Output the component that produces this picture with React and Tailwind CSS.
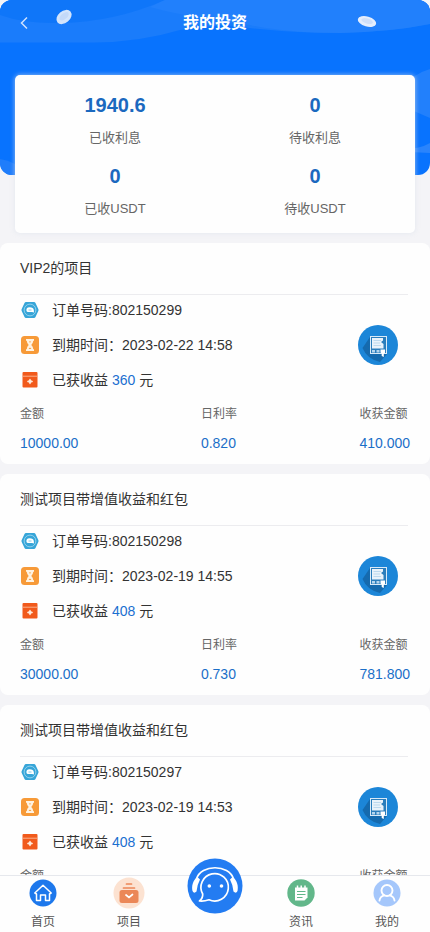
import React from 'react';

const orders = [
  { title: 'VIP2的项目', no: '802150299', due: '2023-02-22 14:58', earned: '360', amount: '10000.00', rate: '0.820', gain: '410.000' },
  { title: '测试项目带增值收益和红包', no: '802150298', due: '2023-02-19 14:55', earned: '408', amount: '30000.00', rate: '0.730', gain: '781.800' },
  { title: '测试项目带增值收益和红包', no: '802150297', due: '2023-02-19 14:53', earned: '408', amount: '30000.00', rate: '0.730', gain: '781.800' },
];

const stats = [
  ['1940.6', '已收利息'],
  ['0', '待收利息'],
  ['0', '已收USDT'],
  ['0', '待收USDT'],
];

function HeaderArt() {
  return (
    <svg className="absolute inset-0 h-full w-full" viewBox="0 0 430 175" preserveAspectRatio="none">
      <rect width="430" height="175" fill="#0873fe" />
      <path d="M0 0H430V24Q390 32 340 33Q285 33 225 25L180 30Q140 42 95 42.500H0Z" fill="#1a7cfb" />
      <path d="M0 0H165Q115 22 60 23Q25 24 0 15Z" fill="#0f76f9" />
      <path d="M165 0H430V24Q390 32 340 33Q285 33 250 25Q190 18 150 7Z" fill="#2180fc" />
      <path d="M430 69Q412 74 400 90V105L430 118Z" fill="#2280fc" />
      <path d="M400 149Q418 150 430 143V153Q414 152 400 152Z" fill="#2a84fc" />
      <path d="M0 159Q8 160 15 164V175H0Z" fill="#1f7dfb" />
      <g transform="rotate(-40 64 17)">
        <ellipse cx="64" cy="17" rx="8.500" ry="6" fill="#d3e4fb" />
        <ellipse cx="64.500" cy="16.500" rx="5.500" ry="3" fill="#c3d9f9" />
      </g>
      <g transform="rotate(16 367 21.500)">
        <ellipse cx="367" cy="21.500" rx="9.500" ry="5" fill="#e4edfc" />
        <ellipse cx="367" cy="21" rx="6" ry="2.500" fill="#cfdff9" />
      </g>
    </svg>
  );
}

function OrderIcon() {
  return (
    <svg className="h-[18px] w-[20px]" viewBox="0 0 20 18">
      <path d="M6 1H14Q15 1 15.500 2L18.300 8Q18.800 9 18.300 10L15.500 16Q15 17 14 17H6Q5 17 4.500 16L1.700 10Q1.200 9 1.700 8L4.500 2Q5 1 6 1Z" fill="#36a5d8" />
      <circle cx="10" cy="9" r="5.900" fill="none" stroke="#9bd5ee" strokeWidth="0.900" />
      <path d="M6.500 10Q5.800 6.500 9.500 6.300Q13.500 6.300 13.800 9L14 11.500L12 11H8Q6.800 11 6.500 10Z" fill="#fff" />
      <path d="M8.500 9H11.500" stroke="#7cc4e5" strokeWidth="0.900" />
    </svg>
  );
}

function TimeIcon() {
  return (
    <svg className="h-[18px] w-[18px]" viewBox="0 0 18 18">
      <rect width="18" height="18" rx="3.500" fill="#f79a38" />
      <path d="M5 3H13V4.800H12.300Q12 7.500 10.300 9Q12 10.500 12.300 13.200H13V15H5V13.200H5.700Q6 10.500 7.700 9Q6 7.500 5.700 4.800H5Z" fill="#fff3e2" />
      <path d="M7.500 13L9 11.500L10.500 13ZM7.800 5.500H10.200L9 6.700Z" fill="#f79a38" />
    </svg>
  );
}

function PacketIcon() {
  return (
    <svg className="h-4 w-4" viewBox="0 0 16 16">
      <rect x="0.500" width="15" height="15.500" rx="1" fill="#f15a1c" />
      <path d="M0.500 3.700H15.500V4.700H0.500Z" fill="#fbb08b" />
      <path d="M8 6.500L9 8.300L11 9.500L9 10.500L8 12.500L7 10.500L5 9.500L7 8.300Z" fill="#ffe9da" />
      <path d="M5.500 9.500H10.500M8 7.500V11.500" stroke="#ffe9da" strokeWidth="1.400" />
    </svg>
  );
}

function ContractIcon() {
  return (
    <svg className="h-10 w-10" viewBox="0 0 40 40">
      <circle cx="20" cy="20" r="20" fill="#1c86d8" />
      <path d="M12 12L4.500 23Q9 34 22 37L29 29V12Z" fill="#156aae" />
      <rect x="12.500" y="11.500" width="16" height="17" fill="#2a7dbc" stroke="#d9eaf8" strokeWidth="1" />
      <path d="M14 13H25V15.500L23 17L25.500 19V23.500H14Z" fill="#e9f2fa" />
      <path d="M15.500 15.500H23M15.500 18H22M15.500 20.500H23" stroke="#9dc6e6" strokeWidth="0.600" />
      <path d="M14 25H17V27.500H14ZM18.500 25H21.500V27.500H18.500Z" fill="#b5d5ee" />
      <path d="M22.500 24.500H27V28L25.800 28.500V32L23.700 31V28.500L22.500 27.500Z" fill="#fff" />
    </svg>
  );
}

function InfoRow({ icon, children }) {
  return (
    <div className="flex h-[35px] items-center">
      <div className="flex w-5 shrink-0 justify-center">{icon}</div>
      <div className="ml-3 whitespace-pre">{children}</div>
    </div>
  );
}

function OrderCard({ order }) {
  return (
    <article className="h-[221px] shrink-0 rounded-lg bg-[#fefefe] px-5 text-sm text-[#333]">
      <h2 className="mr-0.5 flex h-[52px] items-center border-b border-[#ececef] pb-0.5 font-normal">{order.title}</h2>
      <div className="relative -mt-[3px]">
        <InfoRow icon={<OrderIcon />}>订单号码:{order.no}</InfoRow>
        <InfoRow icon={<TimeIcon />}>到期时间：{order.due}</InfoRow>
        <InfoRow icon={<PacketIcon />}>已获收益 <span className="text-[#1b6fd0]">{order.earned}</span> 元</InfoRow>
        <div className="absolute right-3 top-[33px]"><ContractIcon /></div>
      </div>
      <div className="mt-0.5 flex justify-between">
        <Figure label="金额" value={order.amount} />
        <Figure label="日利率" value={order.rate} />
        <Figure label="收获金额" value={order.gain} />
      </div>
    </article>
  );
}

function Figure({ label, value }) {
  return (
    <div className="flex flex-col">
      <span className="flex h-[30px] items-center whitespace-nowrap text-xs text-[#666]">{label}</span>
      <span className="-mt-px flex h-[30px] items-center text-[#1b6fc8]">{value}</span>
    </div>
  );
}

function HomeIcon() {
  return (
    <svg className="h-7 w-7" viewBox="0 0 28 28">
      <circle cx="14" cy="14" r="13.500" fill="#1d78ec" />
      <path d="M5.800 14L14 6.300L22.200 14L20.500 15V21.500H16.500V16H11.500V21.500H7.500V15Z" fill="none" stroke="#fff" strokeWidth="1.500" strokeLinejoin="round" />
    </svg>
  );
}

function ProjectIcon() {
  return (
    <svg className="h-8 w-8" viewBox="0 0 32 32">
      <circle cx="16" cy="16" r="15.500" fill="#fce2d1" />
      <path d="M13.500 7H18.500M10.500 11H21.500" stroke="#eb8757" strokeWidth="1.700" strokeLinecap="round" />
      <rect x="6.500" y="13" width="19" height="13" rx="2.500" fill="#eb8757" />
      <path d="M13 18L16 20.500L19.500 17.500" fill="none" stroke="#fff" strokeWidth="1.700" strokeLinecap="round" />
    </svg>
  );
}

function NewsIcon() {
  return (
    <svg className="h-7 w-7" viewBox="0 0 28 28">
      <circle cx="14" cy="14" r="13.700" fill="#62b78a" />
      <path d="M8 8.500H20.500V18.500L17.500 21.500H8Z" fill="#fff" />
      <path d="M10.500 6.500V10M14.200 6.500V10M18 6.500V10" stroke="#fff" strokeWidth="1.500" />
      <path d="M10 12.500H18.500M10 15.500H18.500M10 18.500H15.500" stroke="#62b78a" strokeWidth="1.100" />
    </svg>
  );
}

function UserIcon() {
  return (
    <svg className="h-7 w-7" viewBox="0 0 28 28">
      <circle cx="14" cy="14" r="13.500" fill="#a5c7fb" />
      <circle cx="14" cy="11.500" r="5.500" fill="none" stroke="#fff" strokeWidth="1.900" />
      <path d="M6.500 21.500Q7 17.500 11 16.300M17 16.300Q21 17.500 21.500 21.500" fill="none" stroke="#fff" strokeWidth="1.900" strokeLinecap="round" />
    </svg>
  );
}

function SupportIcon() {
  return (
    <svg className="h-14 w-14" viewBox="0 0 56 56">
      <circle cx="28" cy="28" r="27.500" fill="#237cf2" />
      <path d="M9.500 21C14 6 42 6 46.500 21" fill="none" stroke="#fff" strokeWidth="1.700" />
      <path d="M10.500 19C5.500 22 4.500 29 5.500 33Q7 36 9.500 33.500Q10 27 13 21.500ZM45.500 19C50.500 22 51.500 29 50.500 33Q49 36 46.500 33.500Q46 27 43 21.500Z" fill="#fff" />
      <path d="M12.500 43Q16 40 15.700 36A13.700 13.700 0 1 1 22 41.800Q17 43.500 12.500 43Z" fill="none" stroke="#fff" strokeWidth="1.700" strokeLinejoin="round" />
      <circle cx="22.300" cy="28" r="1.800" fill="#fff" />
      <circle cx="34.500" cy="28" r="1.800" fill="#fff" />
    </svg>
  );
}

const tabs = [
  ['首页', HomeIcon],
  ['项目', ProjectIcon],
  ['', SupportIcon],
  ['资讯', NewsIcon],
  ['我的', UserIcon],
];

export default function App() {
  return (
    <div className="relative flex h-[932px] w-[430px] flex-col overflow-hidden bg-[#f4f4f7] font-['Liberation_Sans','Noto_Sans_CJK_SC',sans-serif]">
      <div className="absolute inset-x-0 top-0 h-[175px] overflow-hidden rounded-xl"><HeaderArt /></div>
      <header className="relative grid h-[46px] shrink-0 grid-cols-[60px_1fr_60px] items-center text-white">
        <svg className="ml-5 h-3.5 w-2" viewBox="0 0 8 14"><path d="M7 1.500L1.500 7L7 12.500" fill="none" stroke="#cfe2ff" strokeWidth="1.500" /></svg>
        <h1 className="text-center text-base font-bold">我的投资</h1>
      </header>
      <section className="relative mx-[15px] mt-[29px] grid h-[158px] shrink-0 grid-cols-2 content-start rounded-[5px] bg-[#fefefe] pt-[13px] shadow-[0_0_5px_rgba(220,225,235,0.7)]">
        {stats.map(([value, label]) => (
          <div key={label} className="flex h-[71px] flex-col items-center">
            <strong className="flex h-[34px] items-center text-xl text-[#1b69bf]">{value}</strong>
            <span className="mt-px flex h-[30px] items-center text-[13px] text-[#666]">{label}</span>
          </div>
        ))}
      </section>
      <main className="relative mt-2.5 flex min-h-0 flex-1 flex-col gap-2.5 overflow-hidden">
        {orders.map((order) => <OrderCard key={order.no} order={order} />)}
      </main>
      <nav className="relative grid h-[57px] shrink-0 grid-cols-5 border-t border-[#e6e8ed] bg-[#fefefe]">
        {tabs.map(([label, Icon], i) => (
          <div key={i} className="relative flex flex-col items-center">
            {label ? (
              <>
                <div className="mt-px flex h-8 items-center"><Icon /></div>
                <span className="mt-0.5 flex h-[22px] items-center text-xs text-[#555]">{label}</span>
              </>
            ) : (
              <div className="absolute -top-[18px]"><Icon /></div>
            )}
          </div>
        ))}
      </nav>
    </div>
  );
}
